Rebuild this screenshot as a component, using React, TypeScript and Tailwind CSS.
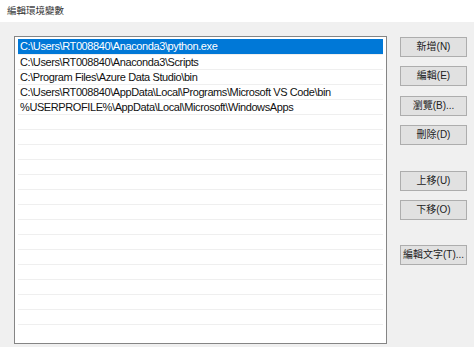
const PATHS = [
  "C:\\Users\\RT008840\\Anaconda3\\python.exe",
  "C:\\Users\\RT008840\\Anaconda3\\Scripts",
  "C:\\Program Files\\Azure Data Studio\\bin",
  "C:\\Users\\RT008840\\AppData\\Local\\Programs\\Microsoft VS Code\\bin",
  "%USERPROFILE%\\AppData\\Local\\Microsoft\\WindowsApps",
];

const EMPTY_ROWS = 15;

function Btn({ label, className }: { label: string; className?: string }) {
  return (
    <button
      type="button"
      className={
        "flex h-[20px] w-[67px] items-center justify-center border border-[#adadad] bg-[#e1e1e1] text-[10px] leading-none text-[#222] " +
        (className ?? "")
      }
    >
      {label}
    </button>
  );
}

export default function App() {
  return (
    <div className="h-[347px] w-[474px] overflow-hidden bg-[#f0f0f0] font-['Liberation_Sans','Noto_Sans_CJK_TC',sans-serif]">
      <div className="flex h-[22px] items-center bg-white pl-[7px] text-[9.5px] text-[#333]">
        編輯環境變數
      </div>

      <div className="flex items-start pl-[14px]">
        {/* path list */}
        <div className="mt-[14px] h-[308px] w-[373px] overflow-hidden border border-[#858585] bg-white px-[3px] pt-[2px]">
          {PATHS.map((p, i) => (
            <div
              key={p}
              className={
                i === 0
                  ? "flex h-[15px] items-center bg-[#0078d7] pl-[2px] text-[11px] tracking-[-0.4px] text-white"
                  : "flex h-[15px] items-center border-t border-[#efefef] pl-[2px] text-[11px] tracking-[-0.4px] text-[#111]"
              }
            >
              {p}
            </div>
          ))}
          {Array.from({ length: EMPTY_ROWS }).map((_, i) => (
            <div key={i} className="h-[15px] border-t border-[#efefef]" />
          ))}
        </div>

        {/* action buttons */}
        <div className="ml-[13px] mt-[15px] flex flex-col">
          <Btn label="新增(N)" />
          <Btn label="編輯(E)" className="mt-[9px]" />
          <Btn label="瀏覽(B)..." className="mt-[10px]" />
          <Btn label="刪除(D)" className="mt-[9px]" />
          <Btn label="上移(U)" className="mt-[26px]" />
          <Btn label="下移(O)" className="mt-[9px]" />
          <Btn label="編輯文字(T)..." className="mt-[25px]" />
        </div>
      </div>
    </div>
  );
}
